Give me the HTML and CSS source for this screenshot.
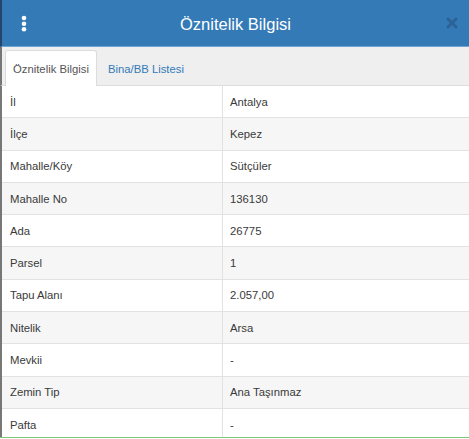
FILE: index.html
```html
<!DOCTYPE html>
<html lang="tr">
<head>
<meta charset="utf-8">
<title>Öznitelik Bilgisi</title>
<link rel="stylesheet" href="styles.css">
</head>
<body>
<div class="window">
  <div class="header">
    <div class="hdr-left">
      <svg class="kebab" width="6" height="18" viewBox="0 0 6 18">
        <circle cx="3" cy="3" r="2.3" fill="#fff"/>
        <circle cx="3" cy="8.7" r="2.3" fill="#fff"/>
        <circle cx="3" cy="14.3" r="2.3" fill="#fff"/>
      </svg>
    </div>
    <div class="title">Öznitelik Bilgisi</div>
    <div class="hdr-right">
      <svg class="close" width="12" height="12" viewBox="0 0 12 12">
        <path d="M2 2 L10 10 M10 2 L2 10" stroke="#2c6296" stroke-width="3" stroke-linecap="round"/>
      </svg>
    </div>
  </div>
  <div class="tabs">
    <div class="tab active">Öznitelik Bilgisi</div>
    <div class="tab">Bina/BB Listesi</div>
  </div>
  <div class="table">
    <div class="row"><div class="cell key">İl</div><div class="cell val">Antalya</div></div>
    <div class="row"><div class="cell key">İlçe</div><div class="cell val">Kepez</div></div>
    <div class="row"><div class="cell key">Mahalle/Köy</div><div class="cell val">Sütçüler</div></div>
    <div class="row"><div class="cell key">Mahalle No</div><div class="cell val">136130</div></div>
    <div class="row"><div class="cell key">Ada</div><div class="cell val">26775</div></div>
    <div class="row"><div class="cell key">Parsel</div><div class="cell val">1</div></div>
    <div class="row"><div class="cell key">Tapu Alanı</div><div class="cell val">2.057,00</div></div>
    <div class="row"><div class="cell key">Nitelik</div><div class="cell val">Arsa</div></div>
    <div class="row"><div class="cell key">Mevkii</div><div class="cell val">-</div></div>
    <div class="row"><div class="cell key">Zemin Tip</div><div class="cell val">Ana Taşınmaz</div></div>
    <div class="row"><div class="cell key">Pafta</div><div class="cell val">-</div></div>
  </div>
</div>
</body>
</html>
```
FILE: styles.css
```css
html, body {
  margin: 0;
  padding: 0;
  background: #fff;
}
body {
  width: 469px;
  height: 439px;
  overflow: hidden;
  font-family: "Liberation Sans", Arial, sans-serif;
}
.window {
  height: 438px;
  box-sizing: border-box;
  border-bottom: 1px solid #79c979;
  overflow: hidden;
  display: flex;
  flex-direction: column;
}
.header {
  flex: 0 0 auto;
  height: 46px;
  background: #337ab7;
  border-left: 2px solid #23466a;
  border-bottom: 1px solid #6fa3d3;
  display: grid;
  grid-template-columns: 1fr auto 1fr;
  align-items: center;
}
.hdr-left {
  display: flex;
  align-items: center;
  padding-left: 19px;
}
.kebab {
  display: block;
  margin-top: 1px;
}
.title {
  color: #fff;
  font-size: 16.5px;
  line-height: 20px;
  padding-top: 1px;
}
.hdr-right {
  display: flex;
  justify-content: flex-end;
  padding-right: 11px;
}
.close {
  display: block;
}
.tabs {
  flex: 0 0 auto;
  height: 38px;
  background: #efefef;
  border-left: 2px solid #777;
  border-bottom: 1px solid #dcdcdc;
  display: flex;
  align-items: flex-end;
  padding-left: 3px;
  gap: 3px;
}
.tab {
  height: 36px;
  box-sizing: border-box;
  padding: 0 7px;
  border: 1px solid transparent;
  border-bottom: 0;
  border-radius: 3px 3px 0 0;
  display: flex;
  align-items: center;
  font-size: 11.3px;
  color: #337ab7;
  margin-bottom: -1px;
}
.tab.active {
  background: #fff;
  border-color: #dcdcdc;
  color: #555;
}
.table {
  flex: 1 1 auto;
  border-left: 2px solid #777;
}
.row {
  display: grid;
  grid-template-columns: 220px 1fr;
  height: 32.3px;
  box-sizing: border-box;
  border-bottom: 1px solid #e2e2e2;
  font-size: 11.3px;
  color: #3a3a3a;
}
.row:nth-child(even) {
  background: #f6f6f6;
}
.cell {
  display: flex;
  align-items: center;
  padding: 0 8px;
}
.cell.val {
  border-left: 1px solid #e2e2e2;
  padding-left: 7px;
}
```
